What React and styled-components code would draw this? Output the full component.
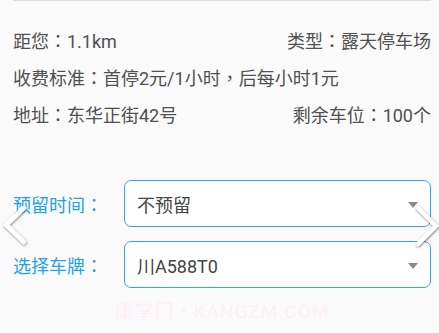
import React from "react";
import styled, { createGlobalStyle } from "styled-components";

const GlobalStyle = createGlobalStyle`
  html, body {
    margin: 0;
    padding: 0;
    background: #fafafa;
  }
  body {
    font-family: Roboto, "Noto Sans CJK TC", sans-serif;
  }
`;

const info = [
  { left: "距您：1.1km", right: "类型：露天停车场" },
  { left: "收费标准：首停2元/1小时，后每小时1元" },
  { left: "地址：东华正街42号", right: "剩余车位：100个" },
];

const fields = [
  { label: "预留时间：", value: "不预留" },
  { label: "选择车牌：", value: "川A588T0" },
];

function Chevron({ side }) {
  const points = side === "left" ? "22,3 4,20 22,37" : "4,3 22,21 4,39";
  return (
    <Arrow side={side}>
      <svg width="28" height="44" viewBox="0 0 28 44">
        <defs>
          <filter id={"sh-" + side} x="-30%" y="-30%" width="160%" height="160%">
            <feDropShadow dx="0.5" dy="1" stdDeviation="1.1" floodColor="#000" floodOpacity="0.55" />
          </filter>
        </defs>
        <polyline
          points={points}
          fill="none"
          stroke="#ffffff"
          strokeWidth="4.5"
          strokeLinecap="round"
          filter={`url(#sh-${side})`}
        />
      </svg>
    </Arrow>
  );
}

export default function App() {
  return (
    <>
      <GlobalStyle />
      <Page>
        <Divider />
        <InfoList>
          {info.map((row, i) => (
            <InfoRow key={i}>
              <span>{row.left}</span>
              {row.right ? <span>{row.right}</span> : null}
            </InfoRow>
          ))}
        </InfoList>
        <Form>
          {fields.map((f) => (
            <FieldRow key={f.label}>
              <Label>{f.label}</Label>
              <Select>
                <span>{f.value}</span>
                <Caret />
              </Select>
            </FieldRow>
          ))}
        </Form>
        <Watermark>康掌门 • KANGZM.COM</Watermark>
        <Chevron side="left" />
        <Chevron side="right" />
      </Page>
    </>
  );
}

const Page = styled.div`
  position: relative;
  width: 439px;
  height: 333px;
  overflow: hidden;
  box-sizing: border-box;
  padding: 0 8px 0 13px;
`;

const Divider = styled.div`
  height: 1px;
  background: #dcdcdc;
`;

const InfoList = styled.div`
  display: flex;
  flex-direction: column;
  padding-top: 22px;
`;

const InfoRow = styled.div`
  display: flex;
  justify-content: space-between;
  height: 37px;
  line-height: 37px;
  font-size: 18px;
  color: #505050;
  white-space: nowrap;
`;

const Form = styled.div`
  display: flex;
  flex-direction: column;
  gap: 14px;
  margin-top: 46px;
`;

const FieldRow = styled.div`
  display: flex;
  align-items: center;
`;

const Label = styled.div`
  width: 111px;
  flex-shrink: 0;
  font-size: 18px;
  color: #1fa3e8;
  white-space: nowrap;
`;

const Select = styled.div`
  flex: 1;
  height: 47px;
  box-sizing: border-box;
  border: 1.5px solid #2aaaea;
  border-radius: 7px;
  background: #ffffff;
  display: flex;
  align-items: center;
  justify-content: space-between;
  padding: 0 12px 0 12px;
  font-size: 18px;
  color: #444444;
`;

const Caret = styled.div`
  width: 0;
  height: 0;
  border-left: 5px solid transparent;
  border-right: 5px solid transparent;
  border-top: 6px solid #8a8a8a;
  margin-top: 3px;
`;

const Watermark = styled.div`
  margin-top: 8px;
  text-align: center;
  font-size: 19px;
  letter-spacing: 1px;
  color: #fdeef8;
`;

const Arrow = styled.div`
  position: absolute;
  top: 205px;
  ${(p) => (p.side === "left" ? "left: 2px;" : "left: 414px;")}
  width: 28px;
  height: 44px;
  line-height: 0;
`;
